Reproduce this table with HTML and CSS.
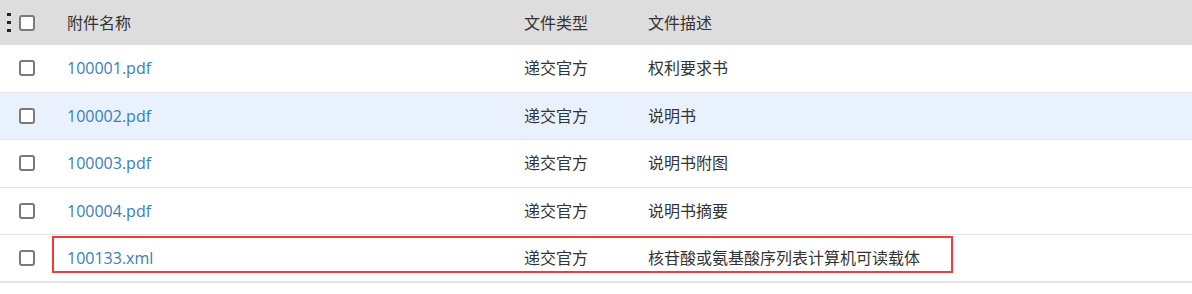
FILE: index.html
```html
<!DOCTYPE html>
<html lang="zh-CN">
<head>
<meta charset="utf-8">
<title>附件列表</title>
<link rel="stylesheet" href="styles.css">
</head>
<body>
<div class="table">
  <div class="row head">
    <div class="cell check-cell">
      <span class="dots"><i></i><i></i><i></i></span>
      <span class="box"></span>
    </div>
    <div class="cell">附件名称</div>
    <div class="cell">文件类型</div>
    <div class="cell">文件描述</div>
  </div>
  <div class="row">
    <div class="cell check-cell"><span class="box"></span></div>
    <div class="cell"><a class="link">100001.pdf</a></div>
    <div class="cell">递交官方</div>
    <div class="cell">权利要求书</div>
  </div>
  <div class="row hover">
    <div class="cell check-cell"><span class="box"></span></div>
    <div class="cell"><a class="link">100002.pdf</a></div>
    <div class="cell">递交官方</div>
    <div class="cell">说明书</div>
  </div>
  <div class="row">
    <div class="cell check-cell"><span class="box"></span></div>
    <div class="cell"><a class="link">100003.pdf</a></div>
    <div class="cell">递交官方</div>
    <div class="cell">说明书附图</div>
  </div>
  <div class="row">
    <div class="cell check-cell"><span class="box"></span></div>
    <div class="cell"><a class="link">100004.pdf</a></div>
    <div class="cell">递交官方</div>
    <div class="cell">说明书摘要</div>
  </div>
  <div class="row last">
    <div class="cell check-cell"><span class="box"></span></div>
    <div class="cell"><a class="link">100133.xml</a></div>
    <div class="cell">递交官方</div>
    <div class="cell">核苷酸或氨基酸序列表计算机可读载体</div>
    <div class="highlight"></div>
  </div>
</div>
</body>
</html>
```

FILE: styles.css
```css
html, body {
  margin: 0;
  padding: 0;
  background: #ffffff;
}

body {
  font-family: "Open Sans", "Noto Sans CJK SC", sans-serif;
  font-size: 16px;
  color: #333333;
}

.table {
  width: 1192px;
}

.row {
  display: grid;
  grid-template-columns: 52px 457px 124px 1fr;
  height: 47.5px;
  box-sizing: border-box;
  border-bottom: 1px solid #e4e4e4;
  align-items: center;
  position: relative;
}

.row.head {
  height: 45px;
  background: #dddddd;
  border-bottom: none;
}

.row.hover {
  background: #e9f2fc;
}

.row.last {
  height: 48px;
  border-bottom: 2px solid #e4e4e4;
}

.cell {
  padding-left: 15px;
  white-space: nowrap;
  line-height: 20px;
}

.check-cell {
  padding-left: 19px;
  display: flex;
  align-items: center;
  position: relative;
  height: 100%;
}

.head .check-cell {
  padding-left: 0;
}

.dots {
  display: flex;
  flex-direction: column;
  gap: 5px;
  margin-left: 7px;
  margin-right: 8px;
}

.dots i {
  display: block;
  width: 4px;
  height: 3px;
  background: #222222;
}

.box {
  display: block;
  width: 16px;
  height: 16px;
  box-sizing: border-box;
  border: 2px solid #7a7a7a;
  border-radius: 3px;
  background: #ffffff;
}

.link {
  color: #3a7eb6;
  text-decoration: none;
}

.highlight {
  position: absolute;
  left: 52px;
  top: 1px;
  width: 901px;
  height: 37px;
  box-sizing: border-box;
  border: 2px solid #f23a3a;
  pointer-events: none;
}
```
